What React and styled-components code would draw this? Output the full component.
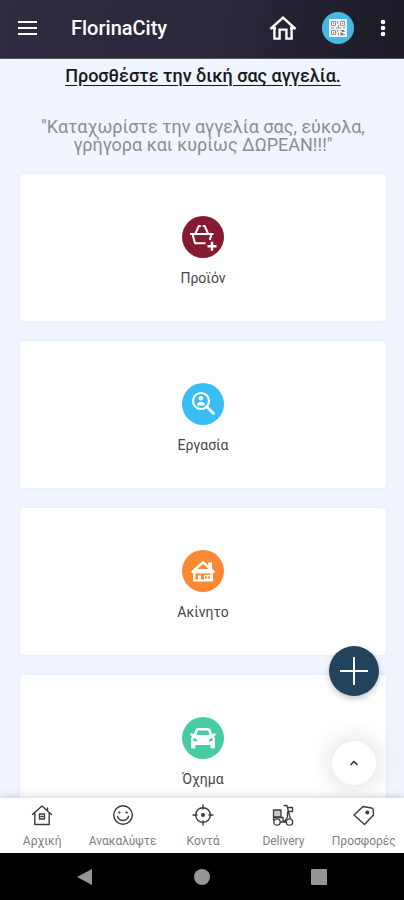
import React from "react";
import styled, { createGlobalStyle } from "styled-components";

const GlobalStyle = createGlobalStyle`
  *, *::before, *::after { box-sizing: border-box; }
  body { margin: 0; font-family: Roboto, "Noto Sans", sans-serif; background: #f0f5ff; }
  button { font: inherit; color: inherit; border: 0; padding: 0; background: none; cursor: pointer; }
  a { color: inherit; text-decoration: none; }
  svg { display: block; }
`;

const Screen = styled.div`
  display: flex;
  flex-direction: column;
  height: 100vh;
`;

const Header = styled.header`
  flex: none;
  display: flex;
  align-items: center;
  height: 59px;
  padding: 0 17px 2px 16px;
  color: #fff;
  background: linear-gradient(100deg, #2f2b40 0%, #2b283b 50%, #1b1a25 100%);
  border-bottom: 1px solid #55545f;
`;

const Brand = styled.h1`
  flex: 1;
  margin: 0 0 0 31px;
  font-size: 20px;
  line-height: 24px;
  font-weight: 500;
`;

const IconButton = styled.button`
  flex: none;
  display: grid;
  place-items: center;
`;

const HeaderActions = styled.div`
  display: flex;
  align-items: center;
  gap: 25px;
`;

const QrButton = styled(IconButton)`
  width: 32px;
  height: 32px;
  border-radius: 50%;
  background: #45b9e4;
`;

const Viewport = styled.div`
  position: relative;
  flex: 1;
  min-height: 0;
`;

const Content = styled.main`
  height: 100%;
  overflow: hidden;
  padding: 5px 18px 0 20px;
  background: #f0f5ff;
`;

const PromptLink = styled.a`
  display: block;
  font-size: 18px;
  line-height: 24px;
  font-weight: 500;
  text-align: center;
  color: #17191d;
  && { text-decoration: underline; }
  text-decoration-thickness: 1px;
  text-underline-offset: 3px;
`;

const Tagline = styled.p`
  margin: 30px 0 20px;
  font-size: 18px;
  line-height: 18px;
  text-align: center;
  color: #8b8e94;
`;

const CardList = styled.div`
  display: flex;
  flex-direction: column;
  gap: 20px;
`;

const Card = styled.a`
  display: flex;
  flex-direction: column;
  align-items: center;
  gap: 10px;
  height: 147px;
  padding-top: 42px;
  border-radius: 4px;
  background: #fff;
  box-shadow: 0 0 4px rgba(60, 80, 130, 0.06);
  font-size: 14px;
  line-height: 20px;
  color: #45474b;
`;

const Badge = styled.span`
  display: grid;
  place-items: center;
  width: 42px;
  height: 42px;
  border-radius: 50%;
  color: #fff;
  background: ${(p) => p.$color};
`;

const Floating = styled.div`
  position: absolute;
  right: 25px;
  bottom: 13px;
  display: flex;
  flex-direction: column;
  align-items: center;
  gap: 45px;
`;

const AddButton = styled(IconButton)`
  width: 50px;
  height: 50px;
  border-radius: 50%;
  color: #fff;
  background: #23425b;
  box-shadow: 0 3px 6px rgba(0, 0, 0, 0.22);
`;

const TopButton = styled(IconButton)`
  width: 44px;
  height: 44px;
  border-radius: 50%;
  color: #333;
  background: #fff;
  box-shadow: 0 0 28px rgba(0, 0, 0, 0.16);
`;

const TabBar = styled.nav`
  position: relative;
  flex: none;
  display: grid;
  grid-template-columns: repeat(5, minmax(0, 1fr));
  height: 55px;
  padding-left: 2px;
  background: #fff;
  box-shadow: 0 -1px 8px rgba(0, 0, 0, 0.18);
`;

const Tab = styled.a`
  display: flex;
  flex-direction: column;
  align-items: center;
  gap: 7px;
  padding-top: 6px;
  font-size: 12px;
  line-height: 16px;
  white-space: nowrap;
  color: #808080;
`;

const SystemBar = styled.footer`
  flex: none;
  display: flex;
  justify-content: center;
  align-items: center;
  gap: 101px;
  height: 47px;
  color: #969696;
  background: #000;
`;

const stroke = {
  fill: "none",
  stroke: "currentColor",
  strokeLinecap: "round",
  strokeLinejoin: "round",
};

const MenuIcon = () => (
  <svg width="24" height="24" viewBox="0 0 24 24" {...stroke} strokeLinecap="butt" strokeWidth="2">
    <path d="M2 6h19M2 12h19M2 18h19" />
  </svg>
);

const HomeIcon = () => (
  <svg width="28" height="28" viewBox="0 0 28 28" {...stroke} strokeLinecap="butt" strokeLinejoin="miter" strokeWidth="2.4">
    <path d="M5.4 13V24.6h5.2v-9h6.8v9h5.2V13" />
    <path d="M1.4 15 14 3.6 26.6 15" />
    <path d="M3 14h4M21 14h4" />
  </svg>
);

const QrIcon = () => (
  <svg width="18" height="18" viewBox="0 0 18 18">
    <path fill="#f0f0f2" d="M0 0h18v18H0z" />
    <g fill="none" stroke="#94949b">
      <path d="M2.5 2.5h4v4h-4zM11.5 2.5h4v4h-4zM2.5 11.5h4v4h-4z" />
      <path d="M8.5 2v3m1 1v3M2 9h3m2 0h5m2-.5h2M8.5 11v2m1 1v2.5M11 11.5h2m1 1h2m-5 1.5h2m1 1.5h2M11 16h2" />
    </g>
    <path fill="#77777e" d="M4 4h1v1H4zM13 4h1v1h-1zM4 13h1v1H4zM13 11h2v2h-2zM12 14h2v2h-2z" />
  </svg>
);

const MoreIcon = () => (
  <svg width="8" height="20" viewBox="0 0 8 20" fill="currentColor">
    <circle cx="4" cy="4" r="2.3" />
    <circle cx="4" cy="10" r="2.3" />
    <circle cx="4" cy="16" r="2.3" />
  </svg>
);

const BasketIcon = () => (
  <svg width="30" height="30" viewBox="0 0 30 30" {...stroke} strokeLinecap="butt" strokeWidth="2">
    <path d="M2 12h23.500M4.500 12l2.500 9.200h10.500M23.500 12l-1.700 6" />
    <path d="M7.500 11.500l3.300-7.500h2M20 11.500 16.700 4h-2" />
    <path d="M24 19.800v9M19.500 24.300h9" strokeWidth="2.400" />
  </svg>
);

const PersonSearchIcon = () => (
  <svg width="26" height="26" viewBox="0 0 26 26" {...stroke} strokeWidth="2.200">
    <circle cx="11" cy="10" r="8" />
    <path d="M17 16l6.500 6.500" strokeWidth="2.800" />
    <circle cx="11" cy="7.300" r="2.300" fill="currentColor" stroke="none" />
    <path d="M7 14.500c0-5 8-5 8 0z" fill="currentColor" stroke="none" />
  </svg>
);

const HouseIcon = () => (
  <svg width="26" height="26" viewBox="0 0 26 26" fill="currentColor">
    <path fillRule="evenodd" d="M13 2.500 18 7V4.500h4v6l3 3-1.300 1.500H23v8.500H3V15h-.700L1 13.500zM13 6 7.500 11h11zM5.500 15.500v6h2.500v-4h3v4h3v-4.500h6.500v-1.500z" />
    <path d="M15 18.500h2v2h-2zM18 18.500h2v2h-2z" fill="#fb8832" />
  </svg>
);

const CarIcon = () => (
  <svg width="28" height="28" viewBox="0 0 28 28" fill="currentColor">
    <path
      fillRule="evenodd"
      d="M6.500 5.500Q7.200 4 9 4h10q1.800 0 2.500 1.500L23.200 10l3.300-1v2.500l-1.700.800Q26 13.500 26 15v8.500q0 1-1 1h-2q-1.500 0-1.500-1.500v-2h-15v2q0 1.500-1.500 1.500H3q-1 0-1-1V15q0-1.500 1.200-2.700L1.500 11.500V9l3.300 1zM9 6.500 7.500 11h13L19 6.500zM4.500 14v3l4 .500q0-3-4-3.500zm19 0q-4 .500-4 3.500l4-.500z"
    />
  </svg>
);

const PlusIcon = () => (
  <svg width="28" height="28" viewBox="0 0 28 28" {...stroke} strokeLinecap="butt" strokeWidth="2">
    <path d="M14 0v28M0 14h28" />
  </svg>
);

const CaretIcon = () => (
  <svg width="10" height="8" viewBox="0 0 10 8" {...stroke} strokeWidth="1.600">
    <path d="M2 5.500 5 2.500l3 3" />
  </svg>
);

const TabHome = () => (
  <svg width="22" height="22" viewBox="0 0 22 22" {...stroke} strokeWidth="1.400">
    <path d="M1.500 10.500 11 2l9.500 8.500M3.800 9v11.500h14.400V9M16.500 4v3" />
    <path d="M8.500 10h5v5h-5zM10 12.500h2" />
  </svg>
);

const TabSmile = () => (
  <svg width="22" height="22" viewBox="0 0 22 22" {...stroke} strokeWidth="1.400">
    <circle cx="11" cy="11" r="9.300" />
    <path d="M5.500 12.500q1.500 4 5.500 4t5.500-4" />
    <path d="M7.200 8.500h.300M14.500 8.500h.300" strokeWidth="2.200" />
  </svg>
);

const TabTarget = () => (
  <svg width="22" height="22" viewBox="0 0 22 22" {...stroke} strokeWidth="1.400">
    <circle cx="11" cy="11" r="7.300" />
    <circle cx="11" cy="11" r="1.300" fill="currentColor" />
    <path d="M11 1v4M11 17v4M1 11h4M17 11h4" />
  </svg>
);

const TabScooter = () => (
  <svg width="22" height="22" viewBox="0 0 22 22" {...stroke} strokeWidth="1.300">
    <path d="M1.500 6h7.500v7H1.500z" fill="#c8c8c8" />
    <path d="M12 1.500h3l1.500 6.500 1.800 6M16 3.500h4.500v4H16.500M15.500 8v5l-2 3M1.500 13v3M2 13.500h9V17h3" />
    <circle cx="5" cy="18" r="3.200" />
    <circle cx="17.500" cy="18" r="3.200" />
    <path d="M8.500 18h5.500" />
  </svg>
);

const TabTag = () => (
  <svg width="22" height="22" viewBox="0 0 22 22" {...stroke} strokeWidth="1.400">
    <path d="M1 11 10 2.500 18.500 4q1.500.300 1.700 1.500l.300 5.500-9 9.500z" />
    <circle cx="14.300" cy="8.500" r="1.300" fill="currentColor" />
  </svg>
);

const CATEGORIES = [
  { label: "Προϊόν", color: "#861a31", Icon: BasketIcon },
  { label: "Εργασία", color: "#38bdf5", Icon: PersonSearchIcon },
  { label: "Ακίνητο", color: "#fb8832", Icon: HouseIcon },
  { label: "Όχημα", color: "#47cba2", Icon: CarIcon },
];

const TABS = [
  { label: "Αρχική", Icon: TabHome },
  { label: "Ανακαλύψτε", Icon: TabSmile },
  { label: "Κοντά", Icon: TabTarget },
  { label: "Delivery", Icon: TabScooter },
  { label: "Προσφορές", Icon: TabTag },
];

const TabIcon = styled.span`
  color: #3b3b3d;
`;

export default function App() {
  return (
    <Screen>
      <GlobalStyle />
      <Header>
        <IconButton aria-label="Menu"><MenuIcon /></IconButton>
        <Brand>FlorinaCity</Brand>
        <HeaderActions>
          <IconButton aria-label="Home"><HomeIcon /></IconButton>
          <QrButton aria-label="QR"><QrIcon /></QrButton>
          <IconButton aria-label="More"><MoreIcon /></IconButton>
        </HeaderActions>
      </Header>
      <Viewport>
        <Content>
          <PromptLink href="#new">Προσθέστε την δική σας αγγελία.</PromptLink>
          <Tagline>"Καταχωρίστε την αγγελία σας, εύκολα, γρήγορα και κυρίως ΔΩΡΕΑΝ!!!"</Tagline>
          <CardList>
            {CATEGORIES.map(({ label, color, Icon }) => (
              <Card key={label} href="#category">
                <Badge $color={color}><Icon /></Badge>
                {label}
              </Card>
            ))}
          </CardList>
        </Content>
        <Floating>
          <AddButton aria-label="Add"><PlusIcon /></AddButton>
          <TopButton aria-label="Scroll to top"><CaretIcon /></TopButton>
        </Floating>
      </Viewport>
      <TabBar>
        {TABS.map(({ label, Icon }) => (
          <Tab key={label} href="#tab">
            <TabIcon><Icon /></TabIcon>
            {label}
          </Tab>
        ))}
      </TabBar>
      <SystemBar>
        <IconButton aria-label="Back">
          <svg width="16" height="18" viewBox="0 0 16 18" fill="currentColor"><path d="M0 9 15 1v16z" /></svg>
        </IconButton>
        <IconButton aria-label="Home screen">
          <svg width="16" height="16" viewBox="0 0 16 16" fill="currentColor"><circle cx="8" cy="8" r="8" /></svg>
        </IconButton>
        <IconButton aria-label="Recent apps">
          <svg width="16" height="16" viewBox="0 0 16 16" fill="currentColor"><rect width="16" height="16" rx="1" /></svg>
        </IconButton>
      </SystemBar>
    </Screen>
  );
}
